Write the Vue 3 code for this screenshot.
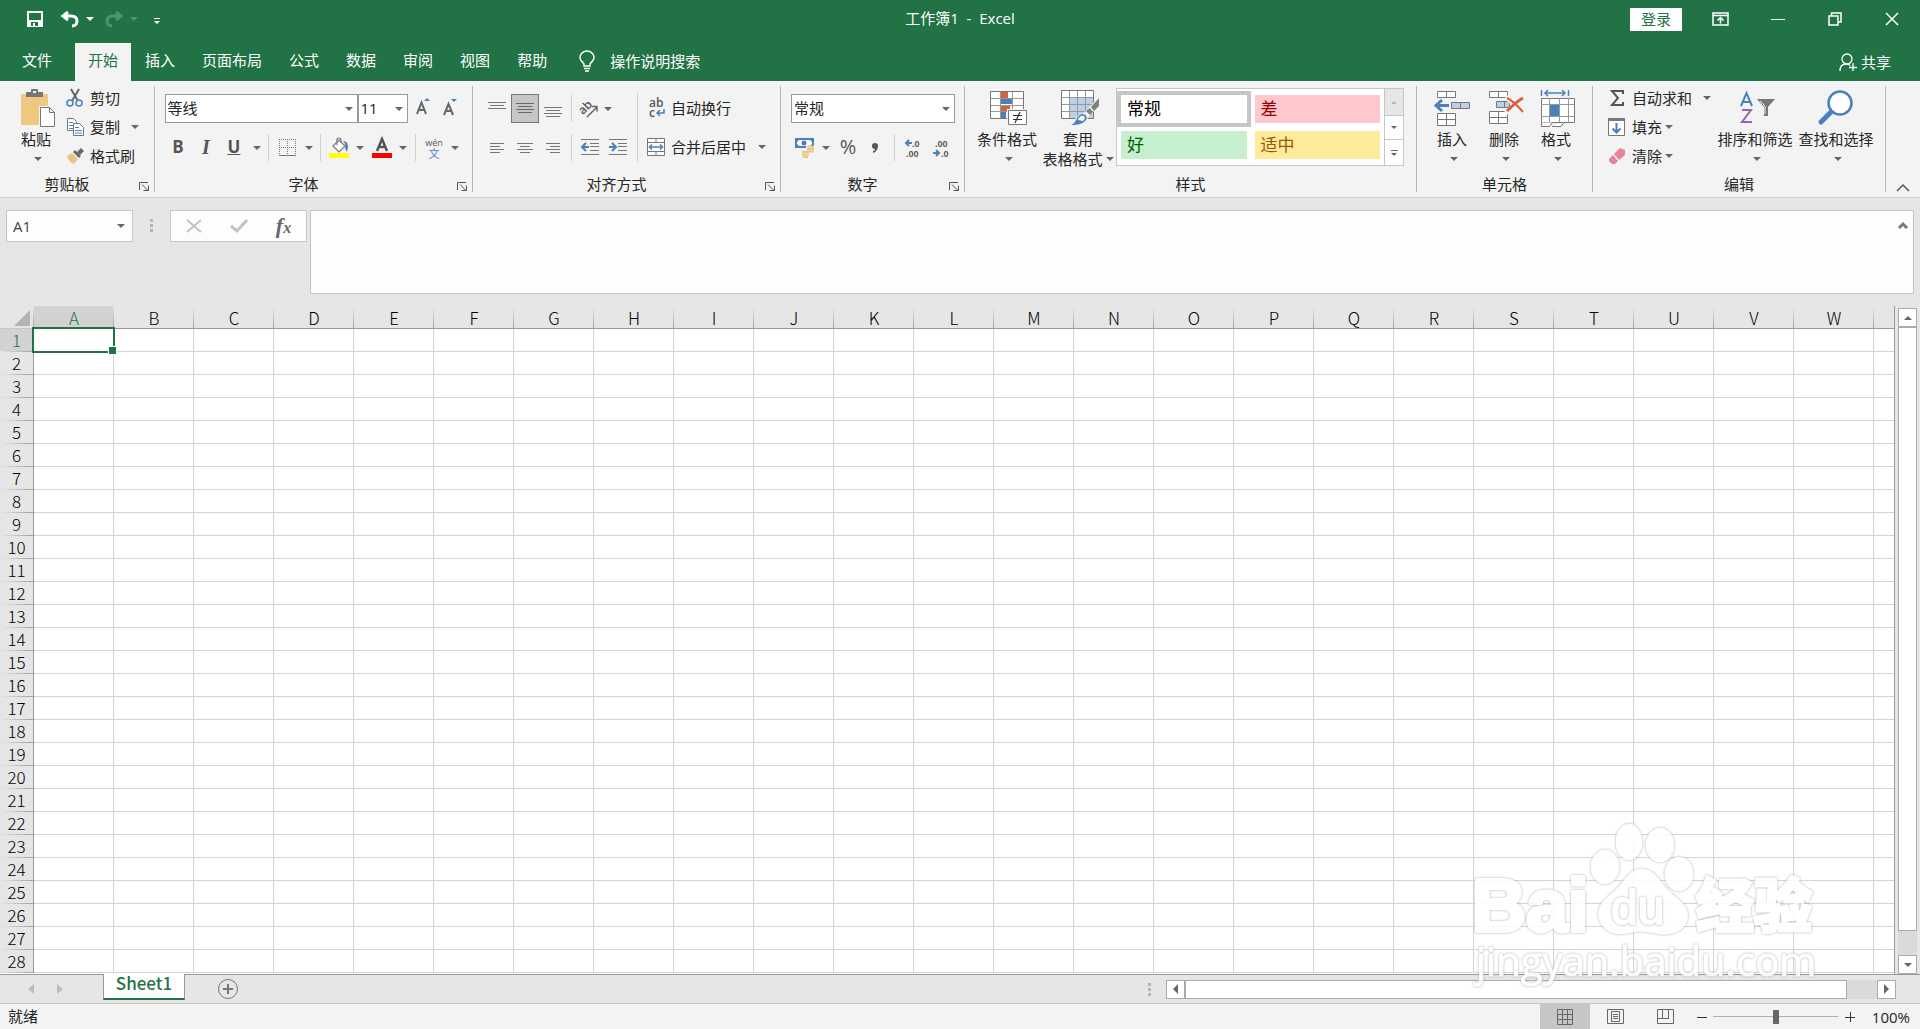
<template>
  <div class="excel">
    <header class="title-bar">
      <div class="quick-access">
        <button class="qa-btn save" aria-label="保存">
          <svg width="16" height="16" viewBox="0 0 16 16">
            <path fill="#fff" fill-rule="evenodd" d="M0 0h16v16H0zM2 2v7h12V2zM4 11v4h2v-3h2v3h3v-4z" />
          </svg>
        </button>
        <button class="qa-btn undo" aria-label="撤消">
          <svg width="18" height="16" viewBox="0 0 18 16">
            <path d="M7 1L2 5l5 4M2 5h8c4 0 6 2 6 5s-2 5-5 5" fill="none" stroke="#fff" stroke-width="3" />
          </svg>
        </button>
        <span class="caret white"></span>
        <button class="qa-btn redo" aria-label="恢复" disabled>
          <svg width="18" height="16" viewBox="0 0 18 16">
            <path d="M11 1l5 4-5 4M16 5H8C4 5 2 7 2 10s2 5 5 5" fill="none" stroke="#4f9370" stroke-width="3" />
          </svg>
        </button>
        <span class="caret faded"></span>
        <button class="qa-btn more" aria-label="自定义快速访问工具栏">
          <svg width="6" height="7" viewBox="0 0 6 7"><path d="M0 0h6v1H0zM0 3h6L3 6z" fill="#fff" /></svg>
        </button>
      </div>
      <div class="doc-title">工作簿1&nbsp; -&nbsp; Excel</div>
      <div class="window-controls">
        <button class="login-btn">登录</button>
        <button class="win-btn" aria-label="功能区显示选项">
          <svg width="17" height="14" viewBox="0 0 17 14" fill="none" stroke="#fff">
            <path d="M1 1h15v12H1zM1 3.5h15" stroke-width="1.5" />
            <path d="M8.500 11.500V6M5.500 8.500l3-3 3 3" stroke-width="1.5" />
          </svg>
        </button>
        <button class="win-btn" aria-label="最小化">
          <svg width="14" height="14"><path d="M0 7.500h14" stroke="#fff" /></svg>
        </button>
        <button class="win-btn" aria-label="还原">
          <svg width="14" height="14" fill="none" stroke="#fff" stroke-width="1.500">
            <path d="M1 4h9v9H1zM3.500 3.500V1H13v9h-2.500" />
          </svg>
        </button>
        <button class="win-btn" aria-label="关闭">
          <svg width="14" height="14"><path d="M1 1l12 12M13 1L1 13" stroke="#fff" stroke-width="1.500" /></svg>
        </button>
      </div>
    </header>

    <nav class="tab-bar">
      <button class="tab file-tab">文件</button>
      <button v-for="t in tabs" :key="t" class="tab" :class="{ active: t === activeTab }" @click="activeTab = t">{{ t }}</button>
      <button class="tell-me">
        <svg width="16" height="21" viewBox="0 0 16 21" fill="none" stroke="#fff">
          <path d="M5 15v-2C4 11 1 10 1 6.500a6.500 6 0 0 1 14 0C15 10 12 11 11 13v2z" stroke-width="1.500" />
          <path d="M5 17.500h6M6 20h4" stroke-width="1.500" />
        </svg>
        操作说明搜索
      </button>
      <button class="share-btn">
        <svg width="18" height="19" viewBox="0 0 18 19" fill="none" stroke="#fff" stroke-width="1.300">
          <circle cx="8" cy="6" r="5" />
          <path d="M1 18c0-4 2-7 6-7 2 0 4 1 4 2M14 10v8M10 14.500h8" />
        </svg>
        共享
      </button>
    </nav>

    <section class="ribbon">
      <!-- 剪贴板 -->
      <div class="group clipboard">
        <div class="group-body">
          <button class="big-btn paste-btn">
            <svg width="36" height="40" viewBox="0 0 36 40">
              <path d="M1 6h27v31H1z" fill="#edc87e" />
              <path d="M6 9V4h5V2q0-1 1-1h5q1 0 1 1v2h5v5z" fill="#777" />
              <path d="M13 3h3v2h-3z" fill="#f3f3f3" />
              <path d="M19 18h12l5 6v16H19z" fill="#f3f3f3" />
              <path d="M20.500 19.500h9l5 5v14h-14zM29.500 19.500v5h5" fill="#fff" stroke="#777" />
            </svg>
            <span>粘贴</span>
            <span class="caret"></span>
          </button>
          <div class="small-list">
            <button class="small-btn">
              <svg width="18" height="18" viewBox="0 0 18 18" fill="none">
                <path d="M5 0l7 12M13 0L6 12" stroke="#666" stroke-width="2" />
                <circle cx="4" cy="14" r="3" stroke="#4a81bd" stroke-width="1.500" />
                <circle cx="13" cy="14" r="3" stroke="#4a81bd" stroke-width="1.500" />
              </svg>
              剪切
            </button>
            <button class="small-btn copy-btn">
              <svg width="18" height="18" viewBox="0 0 18 18">
                <path d="M1.500 .5h6l3 3v9h-9z" fill="#fff" stroke="#777" />
                <path d="M3 4.500h4M3 7.500h4M3 10.500h4" stroke="#4a81bd" />
                <path d="M7.500 5.500h6l4 4v8h-10z" fill="#fff" stroke="#777" />
                <path d="M9 9.500h4M9 12.500h7M9 15h7" stroke="#4a81bd" />
              </svg>
              复制
              <span class="caret"></span>
            </button>
            <button class="small-btn">
              <svg width="18" height="16" viewBox="0 0 18 16">
                <path d="M1 8l5-3 6 6-4 5c-3-1-6-4-7-8z" fill="#edc287" />
                <path d="M7 4l2-2 6 6-2 2z" fill="#666" />
                <path d="M11 4l4-4 3 3-4 4z" fill="#666" />
              </svg>
              格式刷
            </button>
          </div>
        </div>
        <div class="group-title">
          <span>剪贴板</span>
          <button class="launcher" aria-label="剪贴板设置"><svg width="10" height="9" viewBox="0 0 10 9"><path :d="launcherPath" fill="none" stroke="#555" /></svg></button>
        </div>
      </div>

      <!-- 字体 -->
      <div class="group font-group">
        <div class="group-body rows">
          <div class="row font-top">
            <label class="combo">
              <select aria-label="字体"><option>等线</option></select>
              <span class="caret"></span>
            </label>
            <label class="combo size-combo">
              <select aria-label="字号"><option>11</option></select>
              <span class="caret"></span>
            </label>
            <button class="tool size-tool" aria-label="增大字号">
              <svg width="16" height="18" viewBox="0 0 16 18">
                <path d="M2 16L6.500 4.500 11 16M4 12h5" fill="none" stroke="#666" stroke-width="2" />
                <path d="M9 3l3-3 3 3z" fill="#4a81bd" />
              </svg>
            </button>
            <button class="tool size-tool" aria-label="减小字号">
              <svg width="16" height="18" viewBox="0 0 16 18">
                <path d="M2 17L6.500 6 11 17M4 13h5" fill="none" stroke="#666" stroke-width="2" />
                <path d="M9 1h6l-3 3z" fill="#4a81bd" />
              </svg>
            </button>
          </div>
          <div class="row font-bottom">
            <button class="tool bold">B</button>
            <button class="tool italic">I</button>
            <button class="tool underline">U</button>
            <span class="caret"></span>
            <span class="sep"></span>
            <button class="tool" aria-label="边框">
              <svg width="17" height="17" viewBox="0 0 17 17" fill="none" stroke="#777">
                <path d="M0 .5h17M.5 0v16M16.500 0v16M8.500 0v16M0 8.500h17" stroke-dasharray="1 1" />
                <path d="M0 16.500h17" />
              </svg>
            </button>
            <span class="caret"></span>
            <span class="sep"></span>
            <button class="tool" aria-label="填充颜色">
              <svg width="20" height="21" viewBox="0 0 20 21">
                <path d="M4 9l6-6 6 6-6 6z" fill="#fff" stroke="#777" stroke-width="1.200" />
                <path d="M8 8V3q0-2 2-2t2 2v3" fill="none" stroke="#777" stroke-width="1.200" />
                <path d="M14 4c4 0 5 3 5 6l-1 5-2-4c1-3 0-5-2-7z" fill="#4a81bd" />
                <path d="M0 16h20v5H0z" fill="#ff0" />
              </svg>
            </button>
            <span class="caret"></span>
            <button class="tool" aria-label="字体颜色">
              <svg width="20" height="21" viewBox="0 0 20 21">
                <path d="M5 14L10 2l5 12M7 10h6" fill="none" stroke="#555" stroke-width="2.500" />
                <path d="M0 16h20v5H0z" fill="#f00" />
              </svg>
            </button>
            <span class="caret"></span>
            <span class="sep"></span>
            <button class="tool phonetic"><span>wén</span><span class="blue">文</span></button>
            <span class="caret"></span>
          </div>
        </div>
        <div class="group-title">
          <span>字体</span>
          <button class="launcher" aria-label="字体设置"><svg width="10" height="9" viewBox="0 0 10 9"><path :d="launcherPath" fill="none" stroke="#555" /></svg></button>
        </div>
      </div>

      <!-- 对齐方式 -->
      <div class="group align-group">
        <div class="group-body">
          <div class="rows">
            <div class="row align-top">
              <button class="tool" aria-label="顶端对齐">
                <svg width="18" height="19"><path d="M0 3.500h18M2 6.500h14M0 9.500h18" stroke="#777" /></svg>
              </button>
              <button class="tool pressed" aria-label="垂直居中">
                <svg width="18" height="19"><path d="M0 4.500h18M2 7.500h14M0 10.500h18M2 13.500h14" stroke="#666" /></svg>
              </button>
              <button class="tool" aria-label="底端对齐">
                <svg width="18" height="19"><path d="M0 8.500h18M2 11.500h14M0 14.500h18M2 17.500h14" stroke="#777" /></svg>
              </button>
              <span class="sep"></span>
              <button class="tool" aria-label="方向">
                <svg width="20" height="20" viewBox="0 0 20 20">
                  <text x="0" y="13" transform="rotate(-45 6 10)" class="icon-text">ab</text>
                  <path d="M8 18L18 8M13 7.500h5v5" fill="none" stroke="#666" stroke-width="1.500" />
                </svg>
              </button>
              <span class="caret"></span>
            </div>
            <div class="row align-bottom">
              <button class="tool" aria-label="左对齐">
                <svg width="14" height="12"><path d="M0 1.500h14M0 4.500h10M0 7.500h14M0 10.500h10" stroke="#777" /></svg>
              </button>
              <button class="tool" aria-label="居中">
                <svg width="16" height="12"><path d="M0 1.500h16M3 4.500h10M0 7.500h16M3 10.500h10" stroke="#777" /></svg>
              </button>
              <button class="tool" aria-label="右对齐">
                <svg width="14" height="12"><path d="M0 1.500h14M4 4.500h10M0 7.500h14M4 10.500h10" stroke="#777" /></svg>
              </button>
              <span class="sep"></span>
              <button class="tool" aria-label="减少缩进量">
                <svg width="18" height="17">
                  <path d="M0 .5h18M9 4.500h9M9 7.500h9M9 11.500h9M0 15.500h18" stroke="#777" />
                  <path d="M8 8H2M5 4L1 8l4 4" fill="none" stroke="#4a81bd" stroke-width="2" />
                </svg>
              </button>
              <button class="tool" aria-label="增加缩进量">
                <svg width="18" height="17">
                  <path d="M0 .5h18M9 4.500h9M9 7.500h9M9 11.500h9M0 15.500h18" stroke="#777" />
                  <path d="M0 8h6M3 4l4 4-4 4" fill="none" stroke="#4a81bd" stroke-width="2" />
                </svg>
              </button>
            </div>
          </div>
          <span class="tall-sep"></span>
          <div class="rows wide">
            <button class="row text-btn">
              <svg width="18" height="20" viewBox="0 0 18 20">
                <text x="2" y="9" class="icon-text">ab</text>
                <text x="2" y="19" class="icon-text">c</text>
                <path d="M17 11v4h-6M13 12l-3 3 3 3" fill="none" stroke="#4a81bd" stroke-width="1.500" />
              </svg>
              自动换行
            </button>
            <button class="row text-btn merge-btn">
              <svg width="18" height="18" viewBox="0 0 18 18">
                <path d="M.5 .5h17v17H.5z" fill="#fff" stroke="#777" />
                <path d="M0 4.500h18M0 13.500h18M9 0v4M9 14v4" stroke="#777" />
                <path d="M3 9h12M5 6.500L2.500 9 5 11.500M13 6.500L15.500 9 13 11.500" fill="none" stroke="#4a81bd" stroke-width="1.500" />
              </svg>
              合并后居中
              <span class="caret"></span>
            </button>
          </div>
        </div>
        <div class="group-title">
          <span>对齐方式</span>
          <button class="launcher" aria-label="对齐设置"><svg width="10" height="9" viewBox="0 0 10 9"><path :d="launcherPath" fill="none" stroke="#555" /></svg></button>
        </div>
      </div>

      <!-- 数字 -->
      <div class="group number-group">
        <div class="group-body rows">
          <div class="row">
            <label class="combo number-combo">
              <select aria-label="数字格式"><option>常规</option></select>
              <span class="caret"></span>
            </label>
          </div>
          <div class="row number-bottom">
            <button class="tool" aria-label="会计数字格式">
              <svg width="20" height="20" viewBox="0 0 20 20">
                <path d="M0 0h19v10H0z" fill="#4a81bd" />
                <path d="M2 4l2-2h11l2 2v2l-2 2H4L2 6z" fill="#fff" />
                <circle cx="9" cy="5" r="2.500" fill="#4a81bd" />
                <path d="M11 8h9v8h-9zM6 13h8v7H6z" fill="#f3f3f3" />
                <path d="M12 8.500h7M12 11h7M12 13.500h7M7 14h7M7 16.500h7M8 19h5" stroke="#edc287" stroke-width="2" />
              </svg>
            </button>
            <span class="caret"></span>
            <button class="tool percent">%</button>
            <button class="tool" aria-label="千位分隔样式">
              <svg width="6" height="10" viewBox="0 0 6 10"><path d="M0 3a3 3 0 0 1 6 0c0 3-2 6-5 7V8c1 0 2-1 2-2-2 0-3-1-3-3z" fill="#555" /></svg>
            </button>
            <span class="sep"></span>
            <button class="tool" aria-label="增加小数位数">
              <svg width="18" height="18" viewBox="0 0 18 18">
                <path d="M8 4H3M5 1L2 4l3 3" fill="none" stroke="#4a81bd" stroke-width="2" />
                <text x="8" y="8" class="icon-text digit">.0</text>
                <text x="2" y="18" class="icon-text digit">.00</text>
              </svg>
            </button>
            <button class="tool" aria-label="减少小数位数">
              <svg width="18" height="18" viewBox="0 0 18 18">
                <text x="3" y="8" class="icon-text digit">.00</text>
                <path d="M1 14h5M4 11l3 3-3 3" fill="none" stroke="#4a81bd" stroke-width="2" />
                <text x="9" y="18" class="icon-text digit">.0</text>
              </svg>
            </button>
          </div>
        </div>
        <div class="group-title">
          <span>数字</span>
          <button class="launcher" aria-label="数字设置"><svg width="10" height="9" viewBox="0 0 10 9"><path :d="launcherPath" fill="none" stroke="#555" /></svg></button>
        </div>
      </div>

      <!-- 样式 -->
      <div class="group styles-group">
        <div class="group-body">
          <button class="big-btn cond-btn">
            <svg width="38" height="36" viewBox="0 0 38 36">
              <path d="M.5 1.500h33v27H.5z" fill="#fff" />
              <path d="M11 2h7v6h-7zM11 15h9v6h-9z" fill="#d9603b" />
              <path d="M11 8h11v6H11zM11 22h5v6h-5z" fill="#4a81bd" />
              <path d="M0 8.500h33M0 15.500h33M0 21.500h33M10.500 1v27M22.500 1v27" stroke="#999" />
              <path d="M.5 1.500h33v27H.5z" fill="none" stroke="#777" />
              <path d="M17 19h21v17H17z" fill="#f3f3f3" />
              <path d="M18.500 20.500h18v14h-18z" fill="#fff" stroke="#777" />
              <path d="M23 25.500h9M23 29.500h9M30 22l-5 11" stroke="#333" stroke-width="1.200" />
            </svg>
            <span>条件格式</span>
            <span class="caret"></span>
          </button>
          <button class="big-btn table-btn">
            <svg width="38" height="36" viewBox="0 0 38 36">
              <path d="M.5 .5h32v28H.5z" fill="#fff" />
              <path d="M9 8h23v20H9z" fill="#bdd0e9" />
              <path d="M0 7.500h32M0 14.500h32M0 21.500h32M8.500 0v28M16.500 0v28M24.500 0v28" stroke="#999" />
              <path d="M.5 .5h32v28H.5z" fill="none" stroke="#777" />
              <path d="M37 8v9l-8 8-6 9H9l8-8 6-3z" fill="#f3f3f3" />
              <path d="M38 8v8l-5 5-3-4zM29 18l3 4-3 3-4-4z" fill="#808080" />
              <path d="M10 35c5-1 5-9 11-11 4 0 6 3 4 6-3 4-8 5-15 5z" fill="#4a81bd" />
              <path d="M17 30q2-5 6-4 2 2-1 5z" fill="#fff" />
            </svg>
            <span>套用</span>
            <span class="with-caret">表格格式<span class="caret"></span></span>
          </button>
          <div class="gallery">
            <div class="gallery-cells">
              <button v-for="s in cellStyles" :key="s.name" class="style-cell" :class="[s.kind, { chosen: s.name === chosenStyle }]" @click="chosenStyle = s.name">{{ s.name }}</button>
            </div>
            <div class="gallery-scroll">
              <button class="off" aria-label="上一行"><span class="caret up"></span></button>
              <button aria-label="下一行"><span class="caret"></span></button>
              <button aria-label="其他"><span class="caret lined"></span></button>
            </div>
          </div>
        </div>
        <div class="group-title"><span>样式</span></div>
      </div>

      <!-- 单元格 -->
      <div class="group cells-group">
        <div class="group-body">
          <button class="big-btn">
            <svg width="40" height="36" viewBox="0 0 40 36" fill="#fff" stroke="#777">
              <path d="M3.500 1.500h18v6h-18zM12.500 1v6M3.500 23.500h18v12h-18zM12.500 23v12M3 29.500h18" />
              <path d="M17.500 12.500h18v6h-18zM26.500 12v6" fill="#bdd0e9" />
              <path d="M15 15.500H3M8 10l-6 5.500L8 21" fill="none" stroke="#4a81bd" stroke-width="3" />
            </svg>
            <span>插入</span>
            <span class="caret"></span>
          </button>
          <button class="big-btn">
            <svg width="36" height="36" viewBox="0 0 36 36" fill="#fff" stroke="#777">
              <path d="M1.500 1.500h18v6h-18zM10.500 1v6M1.500 21.500h18v12h-18zM10.500 21v12M1 27.500h18" />
              <path d="M8.500 11.500h13v6h-13zM16.500 11v6" fill="#bdd0e9" />
              <path d="M18 7l18 16M36 7L18 23" stroke="#f3f3f3" stroke-width="5" />
              <path d="M19 8c6 3 11 8 16 14" fill="none" stroke="#d9603b" stroke-width="2" />
              <path d="M35 8c-6 3-11 8-16 13" fill="none" stroke="#d9603b" stroke-width="3" />
            </svg>
            <span>删除</span>
            <span class="caret"></span>
          </button>
          <button class="big-btn">
            <svg width="36" height="38" viewBox="0 0 36 38" fill="#fff" stroke="#777">
              <path d="M1.500 9.500h33v24h-33z" />
              <path d="M9.500 9v24M19.500 9v24M28.500 9v24M1 15.500h33M1 27.500h33" stroke="#999" />
              <path d="M10 16h9v11h-9z" fill="#4a81bd" stroke="none" />
              <path d="M1.500 33.500v4h8l3-4M12 37.500h9l3-4" />
              <path d="M1.500 1v6M28.500 1v6M5 4h20M8 1L5 4l3 3M22 1l3 3-3 3" fill="none" stroke="#4a81bd" stroke-width="1.500" />
            </svg>
            <span>格式</span>
            <span class="caret"></span>
          </button>
        </div>
        <div class="group-title"><span>单元格</span></div>
      </div>

      <!-- 编辑 -->
      <div class="group edit-group">
        <div class="group-body">
          <div class="small-list">
            <button class="small-btn sum-btn">
              <svg width="18" height="18" viewBox="0 0 18 18"><path d="M15 5V2H4l6 7-6 7h11v-3" fill="none" stroke="#555" stroke-width="2" /></svg>
              自动求和
              <span class="caret"></span>
            </button>
            <button class="small-btn">
              <svg width="18" height="18" viewBox="0 0 18 18">
                <path d="M.5 .5h16v17H.5z" fill="#fff" stroke="#777" />
                <path d="M0 0h17v3H0z" fill="#777" />
                <path d="M8.500 5v9M4.500 10.500l4 4 4-4" fill="none" stroke="#4a81bd" stroke-width="2" />
              </svg>
              填充
              <span class="caret"></span>
            </button>
            <button class="small-btn">
              <svg width="18" height="18" viewBox="0 0 18 18">
                <path d="M6 7l6-6 5 2v5l-6 5z" fill="#e8829a" />
                <path d="M5 8l5 6-3 3H4l-3-3v-2z" fill="#e8829a" />
              </svg>
              清除
              <span class="caret"></span>
            </button>
          </div>
          <button class="big-btn sort-btn">
            <svg width="38" height="36" viewBox="0 0 38 36" fill="none">
              <path d="M3 16L8.500 3 14 16M5 12h7" stroke="#4a81bd" stroke-width="2" />
              <path d="M4 20h9L4 32h10" stroke="#9a62b8" stroke-width="2" />
              <path d="M19 9h18l-7 8v9h-4v-9z" fill="#777" />
              <path d="M22 11l5 5v8" stroke="#f3f3f3" />
            </svg>
            <span>排序和筛选</span>
            <span class="caret"></span>
          </button>
          <button class="big-btn find-btn">
            <svg width="40" height="36" viewBox="0 0 40 36" fill="none" stroke="#4a81bd">
              <path d="M15 20L3 32" stroke-width="5" stroke-linecap="round" />
              <circle cx="22" cy="13" r="11.500" fill="#fff" stroke-width="2.500" />
            </svg>
            <span>查找和选择</span>
            <span class="caret"></span>
          </button>
        </div>
        <div class="group-title"><span>编辑</span></div>
      </div>

      <button class="collapse-btn" aria-label="折叠功能区">
        <svg width="14" height="8"><path d="M1 7l6-6 6 6" fill="none" stroke="#555" stroke-width="1.500" /></svg>
      </button>
    </section>

    <section class="formula-bar">
      <label class="name-box">
        <input type="text" value="A1" aria-label="名称框" />
        <span class="caret"></span>
      </label>
      <span class="dots"></span>
      <div class="formula-tools">
        <button aria-label="取消">
          <svg width="16" height="14"><path d="M1 1l14 12M15 1L1 13" stroke="#c3c3c3" stroke-width="2" /></svg>
        </button>
        <button aria-label="输入">
          <svg width="18" height="14"><path d="M1 7l6 5L17 1" fill="none" stroke="#c3c3c3" stroke-width="3" /></svg>
        </button>
        <button class="fx"><i>f</i><i class="fx-x">x</i></button>
      </div>
      <div class="formula-input">
        <textarea aria-label="编辑栏"></textarea>
        <button aria-label="折叠编辑栏">
          <svg width="10" height="7"><path d="M1 6l4-4 4 4" fill="none" stroke="#777" stroke-width="3" /></svg>
        </button>
      </div>
    </section>

    <main class="sheet-area">
      <div class="sheet">
        <table>
          <thead>
            <tr>
              <th class="corner"><svg width="16" height="16"><path d="M16 0v16H0z" fill="#b4b4b4" /></svg></th>
              <th v-for="c in columns" :key="c" class="col-head" :class="{ current: c === 'A' }">{{ c }}</th>
              <th class="rest"></th>
            </tr>
          </thead>
          <tbody>
            <tr v-for="r in 28" :key="r">
              <th class="row-head" :class="{ current: r === 1 }">{{ r }}</th>
              <td v-for="c in columns" :key="c"><span v-if="r === 1 && c === 'A'" class="cursor"></span></td>
              <td class="rest"></td>
            </tr>
          </tbody>
        </table>
      </div>
      <div class="v-scroll">
        <button aria-label="向上滚动"><span class="caret up"></span></button>
        <div class="v-thumb"></div>
        <div class="v-track"></div>
        <button aria-label="向下滚动"><span class="caret"></span></button>
      </div>
    </main>

    <section class="sheet-bar">
      <div class="sheet-nav">
        <svg width="6" height="10"><path d="M6 0v10L0 5z" fill="#bcbcbc" /></svg>
        <svg width="6" height="10"><path d="M0 0v10l6-5z" fill="#bcbcbc" /></svg>
      </div>
      <button class="sheet-tab">Sheet1</button>
      <button class="add-sheet" aria-label="新工作表">
        <svg width="20" height="20" fill="none" stroke="#777">
          <circle cx="10" cy="10" r="9.500" />
          <path d="M5 10h10M10 5v10" stroke-width="2" />
        </svg>
      </button>
      <span class="dots"></span>
      <div class="h-scroll">
        <button aria-label="向左滚动"><svg width="5" height="10"><path d="M5 0v10L0 5z" fill="#666" /></svg></button>
        <div class="h-thumb"></div>
        <div class="h-track"></div>
        <button aria-label="向右滚动"><svg width="5" height="10"><path d="M0 0v10l5-5z" fill="#666" /></svg></button>
      </div>
    </section>

    <footer class="status-bar">
      <span class="status-text">就绪</span>
      <button class="view-btn on" aria-label="普通">
        <svg width="16" height="16" fill="none" stroke="#666"><path d="M.5 .5h15v15H.5zM5.500 0v16M10.500 0v16M0 5.500h16M0 10.500h16" /></svg>
      </button>
      <button class="view-btn" aria-label="页面布局">
        <svg width="17" height="15" fill="none" stroke="#666"><path d="M.5 .5h16v14H.5zM4.500 2.500h8v10h-8zM6 5.500h5M6 7.500h5M6 9.500h5" /></svg>
      </button>
      <button class="view-btn" aria-label="分页预览">
        <svg width="17" height="15" fill="none" stroke="#666"><path d="M.5 .5h16v14H.5zM5.500 0v9M11.500 0v9M0 9.500h12" /></svg>
      </button>
      <button class="zoom-btn" aria-label="缩小"><svg width="10" height="10"><path d="M0 5.500h10" stroke="#333" /></svg></button>
      <input v-model="zoom" class="zoom-slider" type="range" min="0" max="200" aria-label="缩放" />
      <button class="zoom-btn" aria-label="放大"><svg width="10" height="10"><path d="M0 5.500h10M5.500 0v10" stroke="#333" /></svg></button>
      <span class="zoom-value">{{ zoom }}%</span>
    </footer>

    <svg class="watermark" width="350" height="180" viewBox="0 0 350 180">
      <text x="2" y="116" class="mark latin">Bai</text>
      <ellipse class="mark" cx="135" cy="52" rx="14" ry="17" />
      <ellipse class="mark" cx="159" cy="27" rx="13" ry="18" />
      <ellipse class="mark" cx="190" cy="30" rx="14" ry="17" />
      <ellipse class="mark" cx="209" cy="59" rx="14" ry="17" />
      <path class="mark" d="M172 54c12 0 17 12 27 22s21 15 18 29c-3 12-17 15-27 14-8-1-14-3-20-3-9 1-18 4-27 2-12-4-17-16-13-26 4-9 14-14 22-24 6-8 11-14 20-14z" />
      <text x="141" y="109" class="mark du">du</text>
      <text x="226" y="112" class="mark cjk">经验</text>
      <text x="6" y="161" class="mark site">jingyan.baidu.com</text>
    </svg>
  </div>
</template>

<script setup>
import { ref } from 'vue'

const tabs = ['开始', '插入', '页面布局', '公式', '数据', '审阅', '视图', '帮助']
const activeTab = ref('开始')

const cellStyles = [
  { name: '常规', kind: 'normal' },
  { name: '差', kind: 'bad' },
  { name: '好', kind: 'good' },
  { name: '适中', kind: 'neutral' }
]
const chosenStyle = ref('常规')

const columns = 'ABCDEFGHIJKLMNOPQRSTUVW'.split('')
const zoom = ref(100)

const launcherPath = 'M.5 8V.5H9M3 2.500l6 6M9.500 3.500v5h-5'
</script>

<style>
body {
  margin: 0;
  background: #e6e6e6;
}
</style>

<style scoped>
.excel {
  position: relative;
  display: flex;
  flex-direction: column;
  height: 100vh;
  overflow: hidden;
  background: #e6e6e6;
  color: #262626;
  font-family: "Open Sans", "Noto Sans CJK SC", sans-serif;
  font-size: 15px;
  line-height: 20px;
}

.excel * {
  box-sizing: border-box;
}

button,
input,
select,
textarea {
  margin: 0;
  padding: 0;
  border: 0;
  background: none;
  color: inherit;
  font: inherit;
  white-space: nowrap;
}

button {
  display: flex;
  align-items: center;
  justify-content: center;
}

svg {
  display: block;
  flex: none;
  overflow: visible;
}

.caret {
  width: 0;
  height: 0;
  flex: none;
  border: 4px solid transparent;
  border-top-color: #666;
  border-bottom: 0;
}

.caret.up {
  border-top: 0;
  border-bottom: 4px solid #666;
}

.caret.white {
  border-top-color: #fff;
}

.caret.faded {
  border-top-color: #4f9370;
}

/* title bar */
.title-bar {
  display: grid;
  flex: none;
  grid-template-columns: 1fr auto 1fr;
  height: 43px;
  padding-bottom: 5px;
  background: #217346;
  color: #fff;
}

.quick-access,
.window-controls {
  display: flex;
  align-items: center;
}

.quick-access {
  padding-left: 27px;
}

.qa-btn.undo {
  margin: 0 7px 0 18px;
}

.qa-btn.redo {
  margin: 0 7px 0 11px;
}

.qa-btn.more {
  margin: 5px 0 0 16px;
}

.doc-title {
  line-height: 36px;
}

.window-controls {
  justify-content: flex-end;
}

.login-btn {
  width: 52px;
  height: 23px;
  margin-right: 10px;
  background: #fff;
  color: #217346;
}

.win-btn {
  width: 57px;
  height: 38px;
}

/* tabs */
.tab-bar {
  display: flex;
  flex: none;
  gap: 1px;
  height: 38px;
  background: #217346;
  color: #fff;
}

.tab {
  padding: 0 13px 4px;
}

.file-tab {
  padding: 0 22px 4px;
}

.tab.active {
  background: #f3f3f3;
  color: #217346;
}

.tell-me {
  gap: 15px;
  margin-left: 18px;
  padding-bottom: 2px;
}

.share-btn {
  gap: 4px;
  margin: 0 29px 0 auto;
}

/* ribbon */
.ribbon {
  display: flex;
  flex: none;
  height: 117px;
  padding: 5px 0;
  border-bottom: 1px solid #d0d0d0;
  background: #f3f3f3;
}

.group {
  display: flex;
  flex-direction: column;
  border-right: 1px solid #b5b5b5;
}

.group-body {
  display: flex;
  flex: 1;
  align-items: flex-start;
}

.group-title {
  display: flex;
  height: 15px;
  line-height: 15px;
}

.group-title span {
  flex: 1;
  text-align: center;
}

.launcher {
  width: 20px;
  padding-top: 4px;
}

.clipboard {
  width: 155px;
}

.clipboard .group-body {
  padding-left: 11px;
}

.font-group {
  width: 318px;
}

.align-group {
  width: 308px;
}

.number-group {
  width: 184px;
}

.styles-group {
  width: 452px;
}

.cells-group {
  width: 176px;
}

.edit-group {
  width: 293px;
}

.big-btn {
  display: grid;
  grid-template-rows: 43px 20px 20px;
  justify-items: center;
  align-items: center;
  width: 52px;
}

.big-btn > svg,
.big-btn > .caret {
  margin-left: 4px;
}

.paste-btn {
  width: 50px;
}

.small-list {
  display: flex;
  flex-direction: column;
  align-items: flex-start;
  gap: 5px;
  padding-left: 5px;
}

.small-btn {
  gap: 6px;
  height: 24px;
}

.small-btn .caret {
  margin-left: -3px;
}

.copy-btn .caret,
.sum-btn .caret {
  margin-left: 5px;
}

.rows {
  display: flex;
  flex-direction: column;
  align-items: flex-start;
  gap: 10px;
  padding: 8px 0 0 10px;
}

.row {
  display: grid;
  align-items: center;
  justify-items: center;
  height: 29px;
}

.tool {
  width: 100%;
  height: 29px;
}

.tool.pressed {
  border: 1px solid #777;
  background: #c6c6c6;
}

.sep {
  width: 1px;
  height: 27px;
  background: #d0d0d0;
}

.font-group .rows {
  padding-left: 9px;
}

.font-top {
  grid-template-columns: 194px 49px 32px 22px;
}

.font-bottom {
  grid-template-columns: 28px 28px 28px 17px 6px 32px 11px 12px 26px 16px 28px 14px 10px 28px 14px;
}

.align-top {
  grid-template-columns: 28px 28px 28px 8px 28px 10px;
}

.align-bottom {
  grid-template-columns: 28px 28px 28px 8px 30px 26px;
}

.number-bottom {
  grid-template-columns: 27px 16px 28px 26px 12px 25px 31px;
}

.combo {
  position: relative;
  width: 193px;
  height: 29px;
  border: 1px solid #999;
  background: #fff;
}

.combo select {
  width: 100%;
  height: 100%;
  padding: 0 0 2px 2px;
  appearance: none;
}

.combo .caret {
  position: absolute;
  top: 12px;
  right: 4px;
}

.size-combo {
  width: 50px;
}

.number-combo {
  width: 164px;
}

.size-tool {
  padding-bottom: 4px;
}

.bold,
.italic,
.underline {
  padding-bottom: 2px;
  color: #555;
  font-size: 17px;
  font-weight: 700;
}

.italic {
  font-family: "Liberation Serif", serif;
  font-size: 20px;
  font-style: italic;
}

.underline {
  text-decoration: underline;
}

.phonetic {
  display: flex;
  flex-direction: column;
  color: #555;
  font-size: 9px;
  line-height: 11px;
}

.phonetic .blue {
  color: #4a81bd;
  font-size: 11px;
}

.icon-text {
  fill: #555;
  font-size: 12px;
  font-weight: 600;
}

.icon-text.digit {
  font-family: "Liberation Sans", sans-serif;
  font-size: 9px;
}

.tall-sep {
  width: 1px;
  height: 69px;
  margin: 7px 0 0 6px;
  background: #d0d0d0;
}

.align-group .wide {
  padding-left: 9px;
}

.text-btn {
  display: flex;
  gap: 6px;
  padding-bottom: 2px;
}

.merge-btn .caret {
  margin-left: 6px;
}

.percent {
  padding-bottom: 2px;
  color: #555;
  font-size: 20px;
}

.cond-btn {
  width: 68px;
  margin-left: 8px;
}

.table-btn {
  width: 74px;
}

.with-caret {
  display: flex;
  align-items: center;
  gap: 3px;
}

.gallery {
  display: flex;
  width: 288px;
  height: 78px;
  margin: 2px 0 0 1px;
  border: 1px solid #c6c6c6;
  background: #fff;
}

.gallery-cells {
  display: grid;
  flex: 1;
  grid-template-columns: 1fr 1fr;
  grid-template-rows: 36px 36px;
  padding-top: 2px;
}

.style-cell {
  justify-content: flex-start;
  padding-left: 6px;
  border: 4px solid #fff;
  font-size: 17px;
}

.style-cell.chosen {
  border-color: #c6c6c6;
}

.normal {
  color: #000;
}

.bad {
  background: #ffc7ce;
  color: #9c0006;
}

.good {
  background: #c6efce;
  color: #006100;
}

.neutral {
  background: #ffeb9c;
  color: #9c5700;
}

.gallery-scroll {
  display: grid;
  grid-template-rows: 26px 24px 26px;
  width: 19px;
  border-left: 1px solid #c6c6c6;
}

.gallery-scroll button + button {
  border-top: 1px solid #c6c6c6;
}

.gallery-scroll .caret {
  border-width: 3px;
  border-bottom-width: 0;
}

.gallery-scroll .off {
  background: #e6e6e6;
}

.gallery-scroll .caret.up {
  border-width: 0 3px 3px;
  border-bottom-color: #b5b5b5;
}

.gallery-scroll button:last-child {
  flex-direction: column;
  gap: 2px;
}

.gallery-scroll button:last-child::before {
  content: "";
  width: 7px;
  height: 1px;
  background: #666;
}

.cells-group .group-body {
  padding-left: 9px;
}

.edit-group .small-list {
  width: 121px;
  padding-left: 15px;
}

.sort-btn {
  width: 82px;
}

.find-btn {
  width: 80px;
}

.collapse-btn {
  align-self: flex-end;
  margin: 0 auto;
}

/* formula bar */
.formula-bar {
  display: flex;
  flex: none;
  align-items: flex-start;
  height: 108px;
  padding: 12px 6px;
}

.name-box,
.formula-tools,
.formula-input {
  display: flex;
  align-items: center;
  height: 32px;
  border: 1px solid #c6c6c6;
  background: #fdfdfd;
}

.name-box {
  width: 127px;
  padding: 0 7px 0 6px;
}

.name-box input {
  width: 100%;
  color: #444;
}

.dots {
  width: 3px;
  height: 13px;
  background: repeating-linear-gradient(#b5b5b5 0 3px, transparent 3px 5px);
}

.formula-bar .dots {
  margin: 9px 17px 0;
}

.formula-tools {
  display: grid;
  grid-template-columns: 45px 45px 45px;
  width: 137px;
}

.fx {
  color: #666;
  font-family: "Liberation Serif", serif;
  font-size: 22px;
  font-weight: 700;
}

.fx-x {
  padding-top: 4px;
  font-size: 16px;
}

.formula-input {
  flex: 1;
  align-items: flex-start;
  height: 84px;
  margin-left: 3px;
}

.formula-input textarea {
  flex: 1;
  height: 100%;
  resize: none;
}

.formula-input button {
  width: 20px;
  height: 28px;
}

/* grid */
.sheet-area {
  display: flex;
  flex: 1;
  min-height: 0;
}

.sheet {
  flex: 1;
  overflow: hidden;
  background: linear-gradient(#e6e6e6 22px, #999 22px 23px, #fff 23px);
  border-right: 1px solid #999;
}

table {
  width: 100%;
  table-layout: fixed;
  border-collapse: separate;
  border-spacing: 0;
}

th,
td {
  width: 80px;
  height: 23px;
  padding: 0;
}

th {
  background: linear-gradient(#e6e6e6, #a0a0a0) right / 1px 100% no-repeat #e6e6e6;
  color: #000;
  font-family: "Noto Sans CJK SC", sans-serif;
  font-size: 17px;
  font-weight: 300;
  line-height: 20px;
}

thead th {
  padding-top: 2px;
  border-bottom: 1px solid #999;
}

th.corner {
  width: 34px;
  border-bottom-color: #c6c6c6;
}

.corner svg {
  margin-left: 14px;
}

.row-head {
  padding-bottom: 2px;
  border-right: 1px solid #999;
  background: linear-gradient(to right, #e6e6e6, #a0a0a0) bottom / 100% 1px no-repeat #e6e6e6;
}

th.rest,
td.rest {
  width: auto;
  background: #fff;
  border-right: 0;
}

th.rest {
  background: #e6e6e6;
}

th.current {
  background-color: #d2d2d2;
  color: #217346;
}

td {
  position: relative;
  border-right: 1px solid #d4d4d4;
  border-bottom: 1px solid #d4d4d4;
  background: #fff;
}

.cursor {
  position: absolute;
  z-index: 1;
  inset: -2px;
  border: 2px solid #217346;
}

.cursor::after {
  content: "";
  position: absolute;
  right: -4px;
  bottom: -4px;
  width: 7px;
  height: 7px;
  border: 1px solid #fff;
  background: #217346;
}

.v-scroll {
  display: flex;
  flex-direction: column;
  width: 19px;
  margin: 2px 3px 0;
}

.v-scroll button,
.v-thumb {
  height: 19px;
  border: 1px solid #ababab;
  background: #fff;
}

.v-thumb {
  flex: 1;
}

.v-track {
  height: 24px;
  background: #dadada;
}

/* sheet tabs */
.sheet-bar {
  display: flex;
  flex: none;
  align-items: center;
  height: 30px;
  border-top: 1px solid #999;
  border-bottom: 1px solid #c6c6c6;
}

.sheet-nav {
  display: flex;
  gap: 23px;
  width: 103px;
  padding-left: 28px;
}

.sheet-tab {
  align-self: flex-start;
  width: 82px;
  height: 26px;
  margin-top: -1px;
  padding-bottom: 6px;
  border: 1px solid #999;
  border-top: 0;
  border-bottom: 2px solid #217346;
  background: #fff;
  color: #217346;
  font-family: "Noto Sans CJK SC", sans-serif;
  font-size: 17px;
  font-weight: 500;
}

.add-sheet {
  margin-left: 33px;
}

.sheet-bar .dots {
  margin-left: auto;
}

.h-scroll {
  display: flex;
  width: 38%;
  height: 19px;
  margin: 0 24px 0 15px;
}

.h-scroll button,
.h-thumb {
  width: 19px;
  border: 1px solid #ababab;
  background: #fff;
}

.h-thumb {
  flex: 1;
}

.h-track {
  width: 30px;
  background: #dadada;
}

/* status bar */
.status-bar {
  display: flex;
  flex: none;
  align-items: center;
  height: 25px;
  padding-right: 10px;
  background: #f3f3f3;
}

.status-text {
  flex: 1;
  padding: 0 0 2px 8px;
}

.view-btn {
  width: 50px;
  height: 25px;
}

.view-btn.on {
  background: #c6c6c6;
}

.zoom-btn {
  width: 23px;
  height: 25px;
}

.zoom-slider {
  width: 125px;
  height: 15px;
  appearance: none;
  background: linear-gradient(#b0b0b0, #b0b0b0) center / 100% 1px no-repeat;
}

.zoom-slider::-webkit-slider-thumb {
  width: 6px;
  height: 14px;
  appearance: none;
  background: #666;
}

.zoom-value {
  width: 49px;
  text-align: right;
}

/* watermark */
.watermark {
  position: absolute;
  z-index: 2;
  right: 100px;
  bottom: 34px;
  opacity: 0.9;
  pointer-events: none;
}

.mark {
  fill: #fff;
  stroke: #fff;
  stroke-linejoin: round;
  filter: drop-shadow(0 0 1px #a0a0a0);
}

.mark.latin,
.mark.du {
  font-family: "Liberation Sans", sans-serif;
  font-size: 75px;
  font-weight: 700;
  stroke-width: 4px;
}

.mark.du {
  font-size: 48px;
  font-weight: 400;
  stroke-width: 2px;
}

.mark.cjk {
  font-family: "Noto Sans CJK SC", sans-serif;
  font-size: 58px;
  font-weight: 900;
  stroke-width: 3px;
}

.mark.site {
  font-size: 40px;
}
</style>
